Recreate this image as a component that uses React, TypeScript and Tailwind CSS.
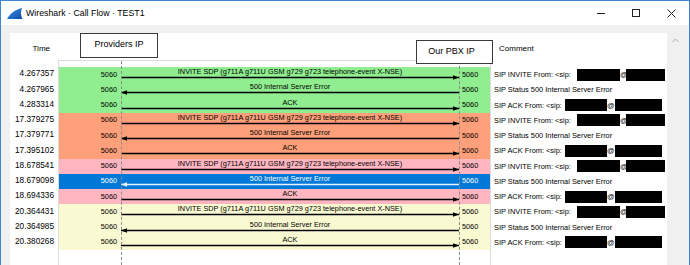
const INVITE = "INVITE SDP (g711A g711U GSM g729 g723 telephone-event X-NSE)";
const ERR = "500 Internal Server Error";

type Kind = "invite" | "err" | "ack";

const groups = [
  { bg: "bg-[#90ee90]", times: ["4.267357", "4.267965", "4.283314"] },
  { bg: "bg-[#ffa07a]", times: ["17.379275", "17.379771", "17.395102"] },
  { bg: "bg-[#ffb6c1]", times: ["18.678541", "18.679098", "18.694336"] },
  { bg: "bg-[#fafad2]", times: ["20.364431", "20.364985", "20.380268"] },
];

const kinds: Kind[] = ["invite", "err", "ack"];

const rows = groups.flatMap((g, gi) =>
  g.times.map((time, i) => ({
    time,
    kind: kinds[i],
    bg: gi === 2 && i === 1 ? "bg-[#0078d7]" : g.bg,
    selected: gi === 2 && i === 1,
  }))
);

function Arrow({ right, color }: { right: boolean; color: string }) {
  return (
    <svg width="338" height="7" viewBox="0 0 338 7" className="block shrink-0">
      <line x1="0" y1="3.5" x2="338" y2="3.5" stroke={color} strokeWidth="1.4" />
      {right ? (
        <polygon points="332,1.2 338,3.5 332,5.8" fill={color} />
      ) : (
        <polygon points="6,1.2 0,3.5 6,5.8" fill={color} />
      )}
    </svg>
  );
}

function Comment({ kind }: { kind: Kind }) {
  if (kind === "err") return <span className="whitespace-nowrap">SIP Status 500 Internal Server Error</span>;
  const invite = kind === "invite";
  return (
    <div className="flex items-center whitespace-nowrap">
      <span className={invite ? "w-[83px] shrink-0" : "w-[71px] shrink-0"}>
        {invite ? "SIP INVITE From: <sip:" : "SIP ACK From: <sip:"}
      </span>
      <span className={invite ? "h-[12px] w-[43px] bg-black shrink-0" : "h-[12px] w-[42px] bg-black shrink-0"} />
      <span className={invite ? "w-[6px] shrink-0" : "w-[8px] shrink-0"}>@</span>
      <span className={invite ? "h-[12px] w-[39px] bg-black shrink-0" : "h-[12px] w-[47px] bg-black shrink-0"} />
    </div>
  );
}

export default function App() {
  return (
    <div className="relative w-[690px] h-[265px] overflow-hidden border-x border-t border-[#3d85d1] bg-[#f0f0f0] flex flex-col font-['Liberation_Sans',Arial,sans-serif] text-black">
      {/* title bar */}
      <div className="h-[24px] bg-white flex items-center pl-[6px] shrink-0">
        <svg width="16" height="11" viewBox="0 0 16 11" className="mt-[1px]">
          <defs>
            <linearGradient id="fin" x1="0" y1="0" x2="1" y2="1">
              <stop offset="0" stopColor="#3a8ee6" />
              <stop offset="1" stopColor="#0f4fa8" />
            </linearGradient>
          </defs>
          <path d="M0 11 C3 5.5 8 1.8 15 0 C13.6 3.6 13.6 7.4 15.5 11 Z" fill="url(#fin)" />
        </svg>
        <span className="ml-[3px] text-[8.8px] leading-none">Wireshark · Call Flow · TEST1</span>
        <div className="ml-auto flex items-center gap-[27px] pr-[13px]">
          <svg width="8" height="8" viewBox="0 0 8 8">
            <line x1="0" y1="4.5" x2="8" y2="4.5" stroke="#222" strokeWidth="1" />
          </svg>
          <svg width="8" height="8" viewBox="0 0 8 8">
            <rect x="0.5" y="0.5" width="7" height="7" fill="none" stroke="#222" strokeWidth="1" />
          </svg>
          <svg width="9" height="9" viewBox="0 0 9 9">
            <path d="M0.5 0.5 L8.5 8.5 M8.5 0.5 L0.5 8.5" stroke="#222" strokeWidth="1" />
          </svg>
        </div>
      </div>

      {/* body */}
      <div className="flex-1 flex pt-[8px] pl-[9px] min-h-0">
        <div className="w-[657px] bg-white flex flex-col overflow-hidden">
          <div className="h-[27px] flex shrink-0 pt-[11px] text-[8px] leading-[10px]">
            <div className="w-[48px] text-right pr-[8px]">Time</div>
            <div className="w-[433px]" />
            <div className="pl-[8px]">Comment</div>
          </div>

          <div className="flex flex-1">
            <div className="w-[48px] pt-[7px] text-[8.25px]">
              {rows.map((r) => (
                <div key={r.time} className="h-[15.25px] flex items-center justify-end pr-[4px]">
                  {r.time}
                </div>
              ))}
            </div>

            <div className="relative w-[433px] border-x border-t border-[#dcdcdc] pt-[6px]">
              {rows.map((r) => {
                const fg = r.selected ? "text-white" : "text-black";
                const msg = r.kind === "invite" ? INVITE : r.kind === "err" ? ERR : "ACK";
                return (
                  <div key={r.time} className={`h-[15.25px] flex ${r.bg} ${fg} text-[7.3px]`}>
                    <div className="w-[62px] flex items-center justify-end pr-[4px] pt-[1px]">5060</div>
                    <div className="w-[338px] flex flex-col items-center">
                      <div className="mt-[1px] leading-[8px] whitespace-nowrap">{msg}</div>
                      <div className="-mt-[2px]">
                        <Arrow right={r.kind !== "err"} color={r.selected ? "#e8f2ff" : "#000"} />
                      </div>
                    </div>
                    <div className="flex-1 flex items-center pl-[3px] pt-[1px]">5060</div>
                  </div>
                );
              })}
              <div className="absolute left-[62px] top-0 bottom-0 border-l border-dashed border-[#8a8a8a]" />
              <div className="absolute left-[400px] top-0 bottom-0 border-l border-dashed border-[#8a8a8a]" />
            </div>

            <div className="flex-1 pt-[7px] pl-[3px] text-[7.4px]">
              {rows.map((r) => (
                <div key={r.time} className="h-[15.25px] flex items-center">
                  <Comment kind={r.kind} />
                </div>
              ))}
            </div>
          </div>
        </div>

        {/* scrollbar */}
        <div className="flex-1 pt-[5px] pl-[5px]">
          <svg width="7" height="5" viewBox="0 0 7 5">
            <polyline points="0.5,4 3.5,1 6.5,4" fill="none" stroke="#a8a8a8" strokeWidth="1" />
          </svg>
        </div>
      </div>

      {/* annotations drawn over the window */}
      <div className="absolute left-[79px] top-[32px] w-[78px] h-[25px] border border-[#3a3a3a] bg-white flex items-center justify-center text-[9px] pb-[2px]">
        Providers IP
      </div>
      <div className="absolute left-[415px] top-[39px] w-[77px] h-[24px] border border-[#3a3a3a] bg-white flex items-center justify-center text-[9px] pr-[6px]">
        Our PBX IP
      </div>
    </div>
  );
}
